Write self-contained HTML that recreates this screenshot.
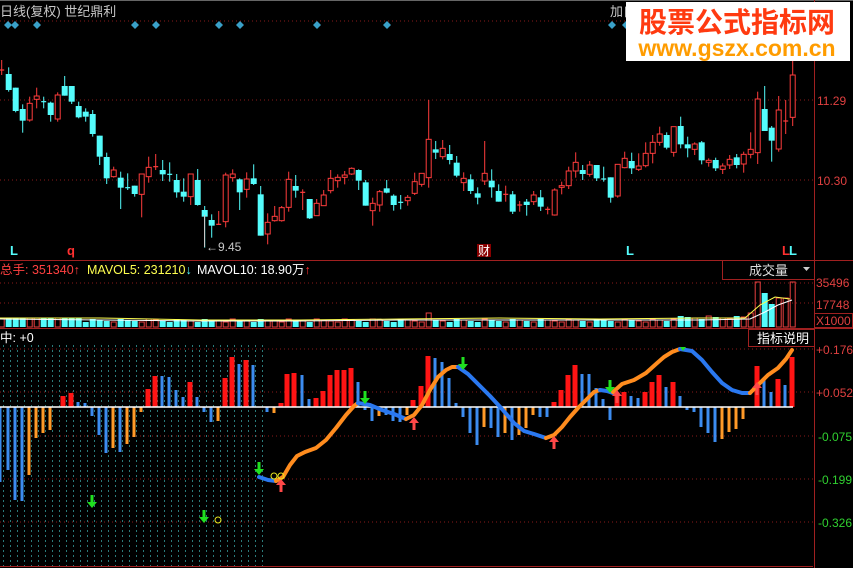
<!DOCTYPE html>
<html><head><meta charset="utf-8"><style>
html,body{margin:0;padding:0;background:#000;width:853px;height:568px;overflow:hidden}
svg{display:block}
text{font-family:"Liberation Sans","Noto Sans CJK SC",sans-serif}
</style></head><body>
<svg id="s" width="853" height="568" xmlns="http://www.w3.org/2000/svg">
<rect width="853" height="568" fill="#000"/>
<line x1="0" y1="0.5" x2="853" y2="0.5" stroke="#666"/>
<g id="grid"></g>
<g stroke="#8a1a1a" stroke-dasharray="1,3">
<line x1="0" y1="21" x2="813" y2="21"/><line x1="0" y1="100" x2="813" y2="100"/><line x1="0" y1="180" x2="813" y2="180"/>
<line x1="0" y1="283" x2="813" y2="283"/><line x1="0" y1="303" x2="813" y2="303"/>
<line x1="0" y1="349" x2="813" y2="349"/><line x1="0" y1="392" x2="813" y2="392"/><line x1="0" y1="436" x2="813" y2="436"/><line x1="0" y1="479" x2="813" y2="479"/><line x1="0" y1="522" x2="813" y2="522"/>
</g>
<line x1="0" y1="260.5" x2="853" y2="260.5" stroke="#a02020"/>
<line x1="0" y1="328.5" x2="853" y2="328.5" stroke="#a02020"/>
<line x1="814.5" y1="0" x2="814.5" y2="568" stroke="#a02020"/>
<line x1="0" y1="566.5" x2="813" y2="566.5" stroke="#a02020"/>
<g id="c"></g><g id="v"></g><g id="h"></g>
<line x1="0" y1="407" x2="793" y2="407" stroke="#fff" stroke-width="1.5"/>
<g id="cv"></g><g id="ar"></g>
<text x="0" y="16" fill="#c8c8c8" font-size="13">日线(复权) 世纪鼎利</text>
<text x="610" y="16" fill="#c8c8c8" font-size="13">加自</text>
<g id="dm" fill="#3aa0c8"></g>
<text x="0" y="274" font-size="12.5" fill="#ff4040">总手: 351340↑</text>
<text x="87" y="274" font-size="12.5" fill="#ffff50">MAVOL5: 231210<tspan fill="#54fcfc">↓</tspan></text>
<text x="197" y="274" font-size="12.5" fill="#fff">MAVOL10: 18.90万<tspan fill="#ff3030">↑</tspan></text>
<text x="0" y="342" font-size="12.5" fill="#fff">中: +0</text>
<text x="10" y="255" font-size="13" fill="#54fcfc" font-weight="bold">L</text>
<text x="67" y="255" font-size="13" fill="#ff3030" font-weight="bold">q</text>
<rect x="477" y="244" width="14" height="13" fill="#800"/><text x="478" y="255" font-size="12" fill="#fff">财</text>
<text x="626" y="255" font-size="13" fill="#54fcfc" font-weight="bold">L</text>
<text x="782" y="255" font-size="13" fill="#ff3030" font-weight="bold">L</text><text x="789" y="255" font-size="13" fill="#54fcfc" font-weight="bold">L</text>
<text x="206" y="251" font-size="12" fill="#c8c8c8">←9.45</text>
<line x1="204.5" y1="215" x2="204.5" y2="247" stroke="#c8c8c8"/>
<g font-size="12" fill="#e04040">
<text x="817" y="105">11.29</text><text x="817" y="185">10.30</text>
<text x="816" y="287">35496</text><text x="816" y="309">17748</text><text x="816" y="325">X1000</text>
<text x="816" y="354">+0.176</text><text x="816" y="397">+0.052</text>
</g>
<rect x="814.5" y="313.5" width="38" height="14" fill="none" stroke="#a02020"/>
<g font-size="12" fill="#30d030"><text x="818" y="441">-0.075</text><text x="818" y="484">-0.199</text><text x="818" y="527">-0.326</text></g>
<rect x="722.5" y="260.5" width="92" height="19" fill="#000" stroke="#a02020"/>
<text x="749" y="275" font-size="13" fill="#ddd">成交量</text>
<path d="M803 267 l7 0 l-3.5 4z" fill="#ccc"/>
<rect x="748.5" y="329.5" width="66" height="17" fill="#000" stroke="#a02020"/>
<text x="757" y="343" font-size="13" fill="#fff">指标说明</text>
<rect x="626" y="2" width="224" height="59" fill="#fff"/>
<text x="737" y="32" text-anchor="middle" font-size="28" font-weight="bold" fill="#ff3a10" font-family="'Noto Sans CJK SC',sans-serif">股票公式指标网</text>
<text x="737" y="56" text-anchor="middle" font-size="23" font-weight="bold" fill="#ff9c00">www.gszx.com.cn</text>
</svg>
<script>
var NS="http://www.w3.org/2000/svg";
function el(p,t,a){var e=document.createElementNS(NS,t);for(var k in a)e.setAttribute(k,a[k]);document.getElementById(p).appendChild(e);return e;}
for(var x=3;x<263;x+=7){el("grid","line",{x1:x+.5,y1:345,x2:x+.5,y2:568,stroke:"#2a7a7a","stroke-dasharray":"2,3"});}
[8,15,37,135,156,219,240,317,387,612,626].forEach(function(x){el("dm","path",{d:"M"+x+" 21l4 4l-4 4l-4-4z"});});
var C=[["x",45,45,15,60],["c",57,105,37,110],["c",98,168,98,172],["c",162,197,148,233],["r",145,195,125,200],["r",123,133,98,160],["y",140,140,125,160],["c",143,180,140,200],["r",120,192,112,200],["c",93,122,63,122],["c",93,140,93,147],["c",153,187,140,190],["c",170,185,160,200],["c",177,237,165,245],["c",242,305,242,330],["c",306,370,293,387],["r",345,365,335,368],["c",368,398,350,462],["y",398,398,355,405],["c",392,417,392,425],["r",357,418,357,487],["r",337,365,305,383],["x",335,335,297,345],["c",345,358,315,378],["y",358,358,322,380],["c",375,412,357,428],["c",410,425,370,440],["r",357,425,357,450],["c",375,450,342,452],["c",465,485,453,578],["c",495,512,478,548],["x",508,508,468,510],["r",360,500,353,517],["r",357,368,343,380],["c",373,412,370,465],["r",372,403,352,428],["c",370,387,328,390],["c",418,542,393,542],["r",502,537,475,568],["r",484,497,453,500],["r",458,497,453,500],["r",373,457,350,470],["c",393,407,360,428],["x",412,412,403,465],["c",432,490,432,492],["r",445,482,432,483],["r",420,452,405,453],["r",370,407,345,415],["r",367,377,358,398],["r",360,367,348,388],["r",340,357,337,360],["c",345,377,343,405],["c",382,452,375,452],["r",445,467,428,512],["r",410,450,405,470],["c",400,413,375,415],["c",422,450,418,467],["y",442,442,420,463],["r",427,437,420,452],["r",380,415,353,420],
["r",355,388,355,395],["r",253,368,135,398],["c",283,293,258,312],["r",280,305,255,313],["c",297,315,270,328],["c",323,362,303,367],["r",370,383,352,408],["c",373,408,358,417],["c",415,428,397,448],["r",355,378,258,390],["c",377,397,343,428],["c",408,440,388,440],["x",418,418,392,440],["c",418,470,408,477],["x",450,450,438,470],["c",440,450,432,482],["r",420,440,408,450],["c",427,455,405,468],["x",463,463,455,478],["r",405,480,400,482],["r",392,397,380,418],["r",348,392,335,402],["r",322,348,292,368],["c",345,357,330,375],["r",330,358,318,365],["c",330,370,330,378],["y",372,372,335,380],["c",367,428,367,443],["r",328,423,327,428],["r",310,338,290,340],["c",318,340,293,357],["r",333,343,295,348],["r",295,332,262,337],["r",262,295,240,325],["r",237,262,215,272],["c",240,278,232,283],["r",215,292,215,305],["c",213,268,185,280],["c",268,280,245,307],["r",267,283,262,300],["c",262,316,258,328],["r",316,322,310,335],["c",315,340,308,348],["r",333,343,325,357],["r",313,330,300,342],["c",307,330,297,340],["r",298,327,290,353],["r",283,298,232,310],["r",132,293,110,327],["c",162,228,93,228],["c",218,257,213,320],["r",165,282,123,290],["x",198,198,135,237],["r",60,187,18,213]];
var RED="#ff3c3c",CY="#54fcfc";
C.forEach(function(d,i){var x=1.7+7*i;var f=function(z){return 55+z/3;};var t=d[0],a=f(d[1]),b=f(d[2]),h=f(d[3]),l=f(d[4]);var col=(t=="r"||t=="x")?RED:CY;
el("c","line",{x1:x,y1:h,x2:x,y2:l,stroke:col,"stroke-width":1});
if(t=="x"||t=="y"){el("c","line",{x1:x-2.5,y1:a,x2:x+2.5,y2:a,stroke:col,"stroke-width":1.2});}
else if(t=="r"){el("c","rect",{x:x-2.5,y:a,width:5,height:Math.max(1,b-a),fill:"#000",stroke:col,"stroke-width":1});}
else{el("c","rect",{x:x-3,y:a,width:6,height:Math.max(1,b-a),fill:col});}
var top;var sp={107:313,108:282,109:293,110:304,111:298,112:298,113:282};
if(sp[i]) top=sp[i]; else if(i<12) top=318; else top=327-(5+((i*7)%4))-(i>95?3:0)-(i==61?6:0);
if(col==RED) el("v","rect",{x:x-2.5,y:top,width:5,height:327-top,fill:"none",stroke:"#e84040","stroke-width":1});
else el("v","rect",{x:x-3,y:top,width:6,height:327-top,fill:CY});
});
el("v","polyline",{points:"0,318 100,318 200,320 300,320 400,319 500,318 600,319 700,318 745,318 760,305 775,297 790,299",fill:"none",stroke:"#ffff50","stroke-width":1});
el("v","polyline",{points:"0,319 100,320 200,321 300,321 400,320 500,320 600,320 700,320 750,319 765,312 778,305 792,300",fill:"none",stroke:"#fff","stroke-width":1});
var B="#3c8cf0",O="#ff9a28",R="#ff1414";
var H=[[0,482,B],[8,470,B],[15,500,B],[22,501,B],[29,475,O],[36,438,O],[43,433,O],[50,430,O],[63,396,R],[71,393,R],[78,402,B],[85,403,B],[92,416,B],[99,435,B],[106,453,B],[113,448,O],[120,452,B],[127,444,O],[134,437,O],[141,412,O],[148,389,R],[155,376,R],[162,376,B],[169,377,B],[176,390,B],[183,397,B],[190,382,R],[197,397,B],[204,412,B],[211,422,B],[218,421,O],[225,378,R],[232,357,R],[239,364,B],[246,360,R],[253,365,B],[267,412,B],[274,413,O],[281,403,R],[287,374,R],[294,373,R],[302,375,B],[309,399,B],[316,398,R],[323,391,R],[330,375,R],[337,370,R],[344,370,R],[351,368,R],[358,382,B],[365,410,B],[372,421,B],[379,416,O],[386,415,B],[393,421,B],[400,422,B],[407,415,O],[413,400,R],[421,386,R],[428,356,R],[435,358,B],[442,362,B],[449,378,B],[456,403,B],[463,417,B],[470,433,B],[477,445,B],[484,427,O],[491,428,B],[498,437,B],[505,433,O],[512,440,B],[519,435,O],[526,428,O],[533,415,O],[540,417,B],[547,417,B],[554,402,R],[561,390,R],[568,375,R],[575,365,R],[582,374,B],[589,374,B],[596,388,B],[603,399,B],[610,420,B],[617,395,R],[624,392,R],[631,396,B],[638,398,B],[645,392,R],[652,382,R],[659,375,R],[666,387,B],[673,382,R],[680,396,B],[687,410,B],[694,412,B],[701,427,B],[708,433,B],[715,442,B],[722,439,O],[729,432,O],[736,429,O],[743,419,O],[757,366,R],[764,378,B],[771,392,B],[778,379,R],[785,385,B],[792,357,R]];
H.forEach(function(d){var w=d[2]==R?5:3;var y1=Math.min(407,d[1]),hh=Math.abs(d[1]-407);el("h","rect",{x:d[0]-w/2,y:y1,width:w,height:hh,fill:d[2]});});
function seg(p,c){el("cv","polyline",{points:p,fill:"none",stroke:c,"stroke-width":4,"stroke-linejoin":"round","stroke-linecap":"round"});}
var BL="#2a78f0",OR="#ff8c1e";
seg("259,477 268,480 276,481",BL);
seg("276,481 283,477 290,465 297,456 305,452 316,448 326,440 336,428 346,415 354,406 358,403",OR);
seg("358,403 370,405 382,410 394,414 406,419",BL);
seg("406,419 414,415 422,405 430,390 438,377 446,370 452,367 458,367",OR);
seg("458,367 468,374 478,384 490,396 502,409 514,423 524,431 534,434 546,438",BL);
seg("546,438 554,435 562,427 570,417 578,408 586,400 594,392 600,390",OR);
seg("600,390 607,391 613,393",BL);
seg("613,392 622,384 634,380 646,373 656,364 664,357 672,352 680,349",OR);
seg("680,349 692,351 702,360 712,372 722,383 732,390 742,393 750,393",BL);
seg("750,393 758,385 768,375 778,368 786,359 792,350",OR);
function dn(x,y){el("ar","path",{d:"M"+(x-1.5)+" "+(y-12)+"h3v7h3.5l-5 6l-5-6h3.5z",fill:"#20e020"});}
function up(x,y){el("ar","path",{d:"M"+(x-1.5)+" "+(y+12)+"h3v-7h3.5l-5-6l-5 6h3.5z",fill:"#ff4848"});}
[[259,474],[365,403],[463,369],[610,392],[92,507],[204,522]].forEach(function(a){dn(a[0],a[1]);});
[[281,480],[414,418],[554,437],[617,391],[757,383]].forEach(function(a){up(a[0],a[1]);});
el("ar","path",{d:"M680 347l3 4l3-4z",fill:"#20e020"});
[[274,476],[281,476],[218,520]].forEach(function(c){el("ar","circle",{cx:c[0],cy:c[1],r:3,fill:"none",stroke:"#e8e820","stroke-width":1});});
</script>
</body></html>
